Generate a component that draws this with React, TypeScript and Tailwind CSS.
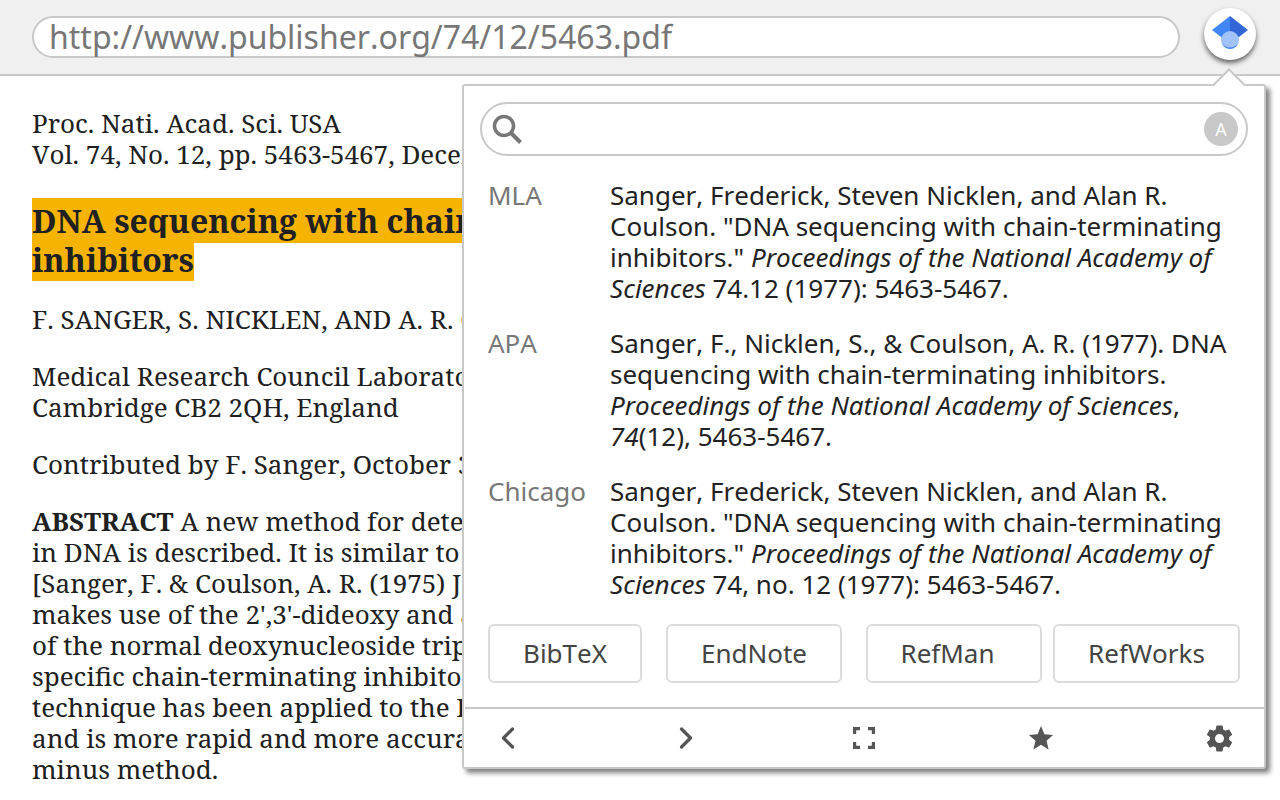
import { ChevronLeft, ChevronRight } from 'lucide-react'

const serif = 'font-["Noto_Serif","DejaVu_Serif",serif]'

const citations = [
    {
        label: 'MLA',
        text: (
            <>
                Sanger, Frederick, Steven Nicklen, and Alan R.
                <br />
                Coulson. "DNA sequencing with chain-terminating
                <br />
                inhibitors." <i>Proceedings of the National Academy of</i>
                <br />
                <i>Sciences</i> 74.12 (1977): 5463-5467.
            </>
        )
    },
    {
        label: 'APA',
        text: (
            <>
                Sanger, F., Nicklen, S., &amp; Coulson, A. R. (1977). DNA
                <br />
                sequencing with chain-terminating inhibitors.
                <br />
                <i>Proceedings of the National Academy of Sciences</i>,
                <br />
                <i>74</i>(12), 5463-5467.
            </>
        )
    },
    {
        label: 'Chicago',
        text: (
            <>
                Sanger, Frederick, Steven Nicklen, and Alan R.
                <br />
                Coulson. "DNA sequencing with chain-terminating
                <br />
                inhibitors." <i>Proceedings of the National Academy of</i>
                <br />
                <i>Sciences</i> 74, no. 12 (1977): 5463-5467.
            </>
        )
    }
]

const exportsList = [
    { name: 'BibTeX', className: 'w-[154px]' },
    { name: 'EndNote', className: 'w-[176px]' },
    { name: 'RefMan', className: 'w-[176px] pr-[13px]' },
    { name: 'RefWorks', className: 'w-[187px] -ml-[13px]' }
]

function Logo() {
    return (
        <svg width="36" height="36" viewBox="0 0 36 36">
            <path d="M18 0 L0 14 L18 28 Z" fill="#4285f4" />
            <path d="M18 0 L36 14 L18 28 Z" fill="#3367d6" />
            <circle cx="18" cy="24" r="9" fill="#a1c2fa" />
            <path d="M9 24 A9 9 0 0 0 27 24 A9 7.500 0 0 1 9 24 Z" fill="#4285f4" />
        </svg>
    )
}

// lines stop where the popup covers them
function Article() {
    return (
        <div className={`${serif} whitespace-nowrap px-8 pt-[32px] text-[26px] leading-[31px] text-[#202020]`}>
            <p>Proc. Nati. Acad. Sci. USA</p>
            <p>Vol. 74, No. 12, pp. 5463-5467, Decem</p>
            <h1 className="mt-[31px] text-[32px] font-bold leading-[39px]">
                <span className="bg-[#f6b400] py-px pr-5">DNA sequencing with chain</span>
                <br />
                <span className="bg-[#f6b400]">inhibitors</span>
            </h1>
            <p className="mt-[25px]">F. SANGER, S. NICKLEN, AND A. R. C</p>
            <p className="mt-[26px]">Medical Research Council Laborator</p>
            <p>Cambridge CB2 2QH, England</p>
            <p className="mt-[26px]">Contributed by F. Sanger, October 3</p>
            <p className="mt-[26px]">
                <b>ABSTRACT</b> A new method for deter
            </p>
            <p>in DNA is described. It is similar to</p>
            <p>[Sanger, F. &amp; Coulson, A. R. (1975) J</p>
            <p>makes use of the 2',3'-dideoxy and a</p>
            <p>of the normal deoxynucleoside triph</p>
            <p>specific chain-terminating inhibitor</p>
            <p>technique has been applied to the D</p>
            <p>and is more rapid and more accurat</p>
            <p>minus method.</p>
        </div>
    )
}

function Popup() {
    return (
        <div className='absolute left-[462px] top-[84px] h-[685px] w-[804px] rounded-[3px] border-2 border-[#c8c8c8] bg-white pl-px pt-px font-["Noto_Sans",sans-serif] shadow-[4px_4px_5px_rgba(0,0,0,0.5)]'>
            <div className="absolute -top-[13px] left-[753px] h-6 w-6 rotate-45 border-l-2 border-t-2 border-[#c8c8c8] bg-white" />
            <div className="relative pl-[15px] pr-[16px] pt-[15px]">
                <div className="flex h-[54px] items-center justify-between rounded-full border-2 border-[#c8c8c8] pl-[9px] pr-[8px]">
                    <svg width="32" height="32" viewBox="0 0 32 32" fill="none" stroke="#777777" strokeWidth="3.5">
                        <circle cx="13" cy="13" r="9.5" />
                        <path d="M20 20 L29.5 29.5" strokeWidth="4" />
                    </svg>
                    <span className="flex h-[34px] w-[34px] items-center justify-center rounded-full bg-[#c8c8c8] text-lg text-white">
                        A
                    </span>
                </div>
            </div>
            <div className="mt-[24px] flex flex-col gap-[24px] pl-[23px] text-[26px] leading-[31px]">
                {citations.map(citation => (
                    <div key={citation.label} className="flex whitespace-nowrap">
                        <div className="w-[122px] text-[#777777]">{citation.label}</div>
                        <div className="text-[#222222]">{citation.text}</div>
                    </div>
                ))}
            </div>
            <div className="mt-[24px] flex gap-6 px-[23px] text-[26px] text-[#444444]">
                {exportsList.map(item => (
                    <button
                        key={item.name}
                        type="button"
                        className={`${item.className} h-[59px] rounded-md border-2 border-[#dcdcdc] bg-white`}
                    >
                        {item.name}
                    </button>
                ))}
            </div>
            <div className="mt-6 flex h-[60px] items-center gap-[142px] border-t-2 border-[#c8c8c8] pl-[25px] text-[#555555]">
                <div className="flex w-9 justify-center">
                    <ChevronLeft size={36} strokeWidth={2.2} />
                </div>
                <div className="flex w-9 justify-center">
                    <ChevronRight size={36} strokeWidth={2.2} />
                </div>
                <div className="flex w-9 justify-center">
                    <svg width="24" height="24" viewBox="0 0 24 24" fill="#555555">
                        <path d="M1 8V1h7v3.200H4.200V8zM16 1h7v7h-3.200V4.200H16zM1 16h3.200v3.800H8V23H1zM19.800 16H23v7h-7v-3.200h3.800z" />
                    </svg>
                </div>
                <div className="-ml-px flex w-9 justify-center">
                    <svg width="26" height="26" viewBox="0 0 24 24" fill="#555555">
                        <path d="M12 1l3.200 7.500 8 .7-6.100 5.300 1.900 8L12 18.300 5 22.500l1.900-8L.8 9.200l8-.7z" />
                    </svg>
                </div>
                <div className="flex w-9 justify-center">
                    <svg width="31" height="31" viewBox="0 0 24 24" fill="#555555">
                        <path d="M19.430 12.980c.04-.32.07-.64.07-.98s-.03-.66-.07-.98l2.110-1.650c.19-.15.24-.42.12-.64l-2-3.460c-.12-.22-.39-.3-.61-.22l-2.490 1c-.52-.4-1.080-.73-1.690-.98l-.38-2.650A.488.488 0 0 0 14 2h-4c-.25 0-.46.18-.49.420l-.38 2.650c-.61.25-1.170.59-1.690.98l-2.490-1c-.23-.09-.49 0-.61.220l-2 3.460c-.13.220-.07.490.12.640l2.110 1.650c-.04.320-.07.650-.07.980s.03.660.07.980l-2.110 1.650c-.19.150-.24.420-.12.640l2 3.460c.12.220.39.300.61.220l2.490-1c.52.400 1.080.730 1.690.980l.38 2.650c.03.240.24.420.49.420h4c.25 0 .46-.18.49-.42l.38-2.650c.61-.25 1.170-.59 1.690-.98l2.490 1c.23.090.49 0 .61-.22l2-3.460c.12-.22.070-.49-.12-.64l-2.110-1.650zM12 15.500c-1.930 0-3.500-1.570-3.500-3.500s1.570-3.500 3.500-3.500 3.500 1.570 3.500 3.500-1.570 3.500-3.500 3.500z" />
                    </svg>
                </div>
            </div>
        </div>
    )
}

export default function App() {
    return (
        <div className="relative h-[800px] w-[1280px] overflow-hidden bg-white [font-kerning:none]">
            <div className="flex h-[76px] items-start justify-between border-b-2 border-[#c8c8c8] bg-[#f0f0f0] pl-8 pr-6 pt-4">
                <div className='flex h-[42px] w-[1148px] items-center rounded-full border-2 border-[#c8c8c8] bg-white pl-[15px] font-["Noto_Sans",sans-serif] text-[32px] text-[#777777]'>
                    http://www.publisher.org/74/12/5463.pdf
                </div>
                <div className="relative z-10 -mt-2 flex h-[52px] w-[52px] items-center justify-center rounded-full bg-white shadow-[0_3px_5px_rgba(0,0,0,0.6)]">
                    <Logo />
                </div>
            </div>
            <Article />
            <Popup />
        </div>
    )
}
